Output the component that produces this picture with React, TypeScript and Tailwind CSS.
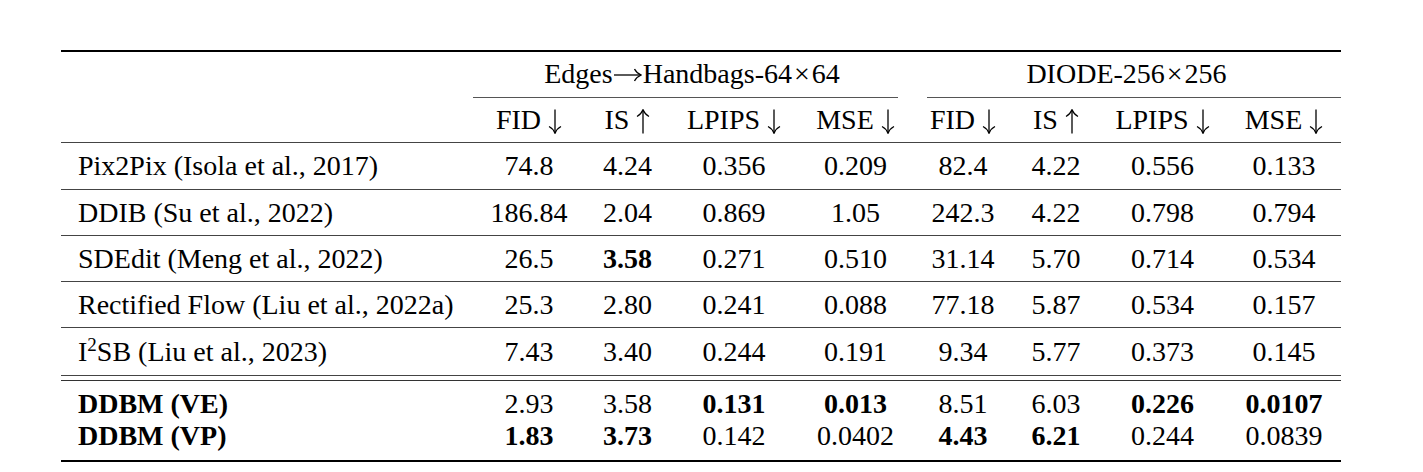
import React from 'react';

type Cell = { v: string; b?: boolean };

interface Row {
  name: React.ReactNode;
  bold?: boolean;
  cells: Cell[];
}

const cols = 'grid grid-cols-[411px_114px_83px_130px_113px_102px_84px_129px_114px]';

const c = (v: string, b = false): Cell => ({ v, b });

const ArrowDown: React.FC = () => (
  <svg width="14" height="25" viewBox="0 0 14 25" className="inline-block align-[-5px] ml-[7px]" fill="none" stroke="black" strokeWidth={1.3}>
    <path d="M7 0.5V24" />
    <path d="M1 17.5Q5 19.5 7 24.2Q9 19.5 13 17.5" />
  </svg>
);

const ArrowUp: React.FC = () => (
  <svg width="14" height="25" viewBox="0 0 14 25" className="inline-block align-[-5px] ml-[7px]" fill="none" stroke="black" strokeWidth={1.3}>
    <path d="M7 1V24.5" />
    <path d="M1 7.5Q5 5.5 7 0.8Q9 5.5 13 7.5" />
  </svg>
);

const ArrowRight: React.FC = () => (
  <svg width="28" height="14" viewBox="0 0 28 14" className="inline-block align-[1px] mx-[1px]" fill="none" stroke="black" strokeWidth={1.3}>
    <path d="M0 7H27" />
    <path d="M20.5 1Q22.5 5 27.2 7Q22.5 9 20.5 13" />
  </svg>
);

const Times: React.FC = () => <span className="mx-[2px]">×</span>;

const rows: Row[] = [
  {
    name: 'Pix2Pix (Isola et al., 2017)',
    cells: [c('74.8'), c('4.24'), c('0.356'), c('0.209'), c('82.4'), c('4.22'), c('0.556'), c('0.133')],
  },
  {
    name: 'DDIB (Su et al., 2022)',
    cells: [c('186.84'), c('2.04'), c('0.869'), c('1.05'), c('242.3'), c('4.22'), c('0.798'), c('0.794')],
  },
  {
    name: 'SDEdit (Meng et al., 2022)',
    cells: [c('26.5'), c('3.58', true), c('0.271'), c('0.510'), c('31.14'), c('5.70'), c('0.714'), c('0.534')],
  },
  {
    name: 'Rectified Flow (Liu et al., 2022a)',
    cells: [c('25.3'), c('2.80'), c('0.241'), c('0.088'), c('77.18'), c('5.87'), c('0.534'), c('0.157')],
  },
  {
    name: (
      <>
        I<span className="text-[19px] relative -top-[10px]">2</span>SB (Liu et al., 2023)
      </>
    ),
    cells: [c('7.43'), c('3.40'), c('0.244'), c('0.191'), c('9.34'), c('5.77'), c('0.373'), c('0.145')],
  },
];

const ours: Row[] = [
  {
    name: 'DDBM (VE)',
    bold: true,
    cells: [c('2.93'), c('3.58'), c('0.131', true), c('0.013', true), c('8.51'), c('6.03'), c('0.226', true), c('0.0107', true)],
  },
  {
    name: 'DDBM (VP)',
    bold: true,
    cells: [c('1.83', true), c('3.73', true), c('0.142'), c('0.0402'), c('4.43', true), c('6.21', true), c('0.244'), c('0.0839')],
  },
];

// row heights include the 1px rule under each row
const rowHeights = ['h-[47px]', 'h-[46px]', 'h-[46px]', 'h-[46px]', 'h-[48px]'];

const metrics: { label: string; up: boolean }[] = [
  { label: 'FID', up: false },
  { label: 'IS', up: true },
  { label: 'LPIPS', up: false },
  { label: 'MSE', up: false },
];

const DataRow: React.FC<{ row: Row; className: string }> = ({ row, className }) => (
  <div className={`${cols} items-center ${className}`}>
    <div className={`pl-[17px] whitespace-nowrap ${row.bold ? 'font-bold' : ''}`}>{row.name}</div>
    {row.cells.map((cell, i) => (
      <div key={i} className={`text-center whitespace-nowrap ${cell.b ? 'font-bold' : ''}`}>
        {cell.v}
      </div>
    ))}
  </div>
);

export default function App() {
  return (
    <div className="w-[1423px] h-[472px] bg-white overflow-hidden">
      <div
        className="ml-[61px] pt-[50px] w-[1280px] text-black text-[28px] leading-none"
        style={{ fontFamily: '"Liberation Serif", "Times New Roman", serif' }}
      >
        <div className="h-[2px] bg-black" />

        {/* group header */}
        <div className={`${cols} h-[46px]`}>
          <div />
          <div className="col-span-4 flex flex-col">
            <div className="flex-1 flex items-center justify-center pb-[2px] whitespace-nowrap">
              <span>
                Edges
                <ArrowRight />
                Handbags-64<Times />64
              </span>
            </div>
            <div className="h-px bg-[#555] ml-[1px] mr-[14px]" />
          </div>
          <div className="col-span-4 flex flex-col">
            <div className="flex-1 flex items-center justify-center pb-[2px] whitespace-nowrap">
              <span>
                DIODE-256<Times />256
              </span>
            </div>
            <div className="h-px bg-[#555] ml-[15px]" />
          </div>
        </div>

        {/* metric header */}
        <div className={`${cols} h-[45px] items-center border-b border-[#444]`}>
          <div />
          {[...metrics, ...metrics].map((m, i) => (
            <div key={i} className="text-center whitespace-nowrap">
              {m.label}
              {m.up ? <ArrowUp /> : <ArrowDown />}
            </div>
          ))}
        </div>

        {rows.map((row, i) => (
          <DataRow key={i} row={row} className={`${rowHeights[i]} border-b border-[#444]`} />
        ))}

        <div className="h-[4px]" />
        <div className="h-px bg-[#333]" />

        <div className="pt-[7px] pb-[8px]">
          {ours.map((row, i) => (
            <DataRow key={i} row={row} className="h-[32px]" />
          ))}
        </div>

        <div className="h-[2px] bg-black" />
      </div>
    </div>
  );
}
